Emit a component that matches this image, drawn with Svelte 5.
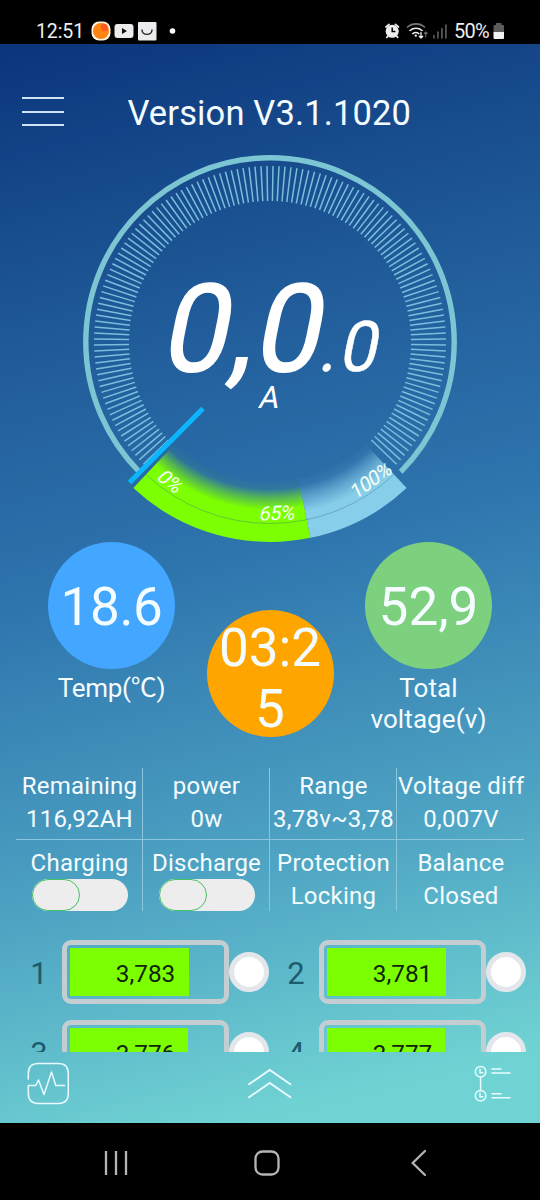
<script lang="ts">
	// gauge geometry, angles in degrees clockwise from the top
	const CX = 270;
	const CY = 342;

	function pt(r: number, deg: number) {
		const a = (deg * Math.PI) / 180;
		return `${(CX + r * Math.sin(a)).toFixed(2)} ${(CY - r * Math.cos(a)).toFixed(2)}`;
	}

	function band(from: number, to: number) {
		return `M${pt(200, from)} A200 200 0 0 0 ${pt(200, to)} L${pt(140, to)} A140 140 0 0 1 ${pt(140, from)}Z`;
	}

	const STEP = 1.9565;
	const ticks = Array.from({ length: 138 }, (_, i) => {
		const deg = (i - 68.5) * STEP;
		return `M${pt(141, deg)} L${pt(176, deg)}`;
	}).join(' ');

	const cells = [
		{ n: 1, v: '3,783', w: 118.5 },
		{ n: 2, v: '3,781', w: 118.5 },
		{ n: 3, v: '3,776', w: 117.5 },
		{ n: 4, v: '3,777', w: 118 }
	];

	let charging = $state(false);
	let discharge = $state(false);
</script>

<div class="screen">
	<div class="status">
		<span class="time">12:51</span>
		<svg class="notif" width="90" height="44" viewBox="90 0 90 44">
			<rect x="91.5" y="21.5" width="19" height="19" rx="7.5" fill="#fff4e4" />
			<circle cx="101" cy="31" r="8" fill="#ff8412" />
			<path d="M101 25q3-3 6 0q2 3 0 6q-4 1-6-2z" fill="#ff5a20" />
			<rect x="114.5" y="24" width="19" height="14" rx="3" fill="#ececee" />
			<path d="M122 28v6l5-3z" fill="#111" />
			<rect x="138" y="22" width="18.5" height="18.5" rx="1" fill="#ececee" />
			<path d="M142 29.5v.6a5 4.3 0 0 0 10 0v-.6" fill="none" stroke="#222" stroke-width="1.4" />
			<circle cx="172.5" cy="31" r="2.8" fill="#fff" />
		</svg>
		<svg class="sys" width="66" height="44" viewBox="383 0 66 44">
			<g fill="none" stroke="#eee" stroke-width="1.8" stroke-linecap="round">
				<path d="M386 27l3-2.6M398.4 27l-3-2.6M388 36l-1.2 1.3M396.5 36l1.2 1.3" />
			</g>
			<circle cx="392.2" cy="31.3" r="6.5" fill="#eee" />
			<path d="M392.2 27.5v4h3.2" fill="none" stroke="#000" stroke-width="1.5" />
			<g fill="none" stroke-width="1.6" stroke-linecap="round">
				<path d="M407.5 27a13 13 0 0 1 17 0" stroke="#777" />
				<path d="M410 30.5a9 9 0 0 1 12 0M412.8 33.6a5 5 0 0 1 6 0" stroke="#eee" />
				<path d="M421 32.5v5.5m-1.7-1.8l1.7 1.8 1.7-1.8" stroke="#eee" stroke-width="1.3" />
				<path d="M425.7 37v-5m-1.5 1.5l1.5-1.5 1.5 1.5" stroke="#666" stroke-width="1.2" />
			</g>
			<circle cx="415.8" cy="35.6" r="1.2" fill="#eee" />
			<g fill="#555">
				<rect x="433" y="35" width="1.8" height="3.5" />
				<rect x="437" y="31.5" width="1.8" height="7" />
				<rect x="441" y="28" width="1.8" height="10.5" />
				<rect x="445" y="24.5" width="1.8" height="14" />
			</g>
		</svg>
		<span class="pct">50%</span>
		<svg class="batt" width="12" height="44" viewBox="493 0 12 44">
			<path d="M496 25v-2h5.5v2H503q1 0 1 1v6H493.5v-6q0-1 1-1z" fill="#5c5c5c" />
			<path d="M493.5 32H504v6q0 1-1 1h-8.500q-1 0-1-1z" fill="#f2f2f2" />
		</svg>
	</div>

	<div class="app">
		<header>
			<button class="menu" aria-label="menu"><i></i><i></i><i></i></button>
			<h1>Version V3.1.1020</h1>
		</header>

		<svg class="gauge" width="540" height="392" viewBox="0 150 540 392">
			<defs>
				<radialGradient id="green" gradientUnits="userSpaceOnUse" cx="270" cy="342" r="200">
					<stop offset="0.7" stop-color="#7cfc00" stop-opacity="0.02" />
					<stop offset="0.735" stop-color="#7cfc00" stop-opacity="0.06" />
					<stop offset="0.78" stop-color="#7cfc00" stop-opacity="0.5" />
					<stop offset="0.84" stop-color="#7cff00" />
				</radialGradient>
				<radialGradient id="sky" gradientUnits="userSpaceOnUse" cx="270" cy="342" r="200">
					<stop offset="0.7" stop-color="#87ceeb" stop-opacity="0.03" />
					<stop offset="0.735" stop-color="#87ceeb" stop-opacity="0.08" />
					<stop offset="0.79" stop-color="#87ceeb" stop-opacity="0.5" />
					<stop offset="0.87" stop-color="#87ceeb" />
				</radialGradient>
			</defs>
			<path class="ring" d="M{pt(184.2, -134.8)} A184.2 184.2 0 1 1 {pt(184.2, 134.8)}" />
			<path class="ticks" d={ticks} />
			<path d={band(223.1, 168.3)} fill="url(#green)" />
			<path d={band(168.3, 136.9)} fill="url(#sky)" />
			<path class="hair" d="M{pt(181.5, 223)} A181.5 181.5 0 0 0 {pt(181.5, 137)}" />
			<line class="needle" x1="129.5" y1="482.5" x2="203" y2="408.5" />
			<g class="marks">
				<text transform="translate(170.5 481.5) rotate(38) skewX(-12)" y="7">0%</text>
				<text transform="translate(277.5 513) rotate(-2) skewX(-12)" y="7">65%</text>
				<text transform="translate(371 480) rotate(-36) skewX(-12)" y="7">100%</text>
			</g>
			<g class="value">
				<text transform="translate(159.3 371) skewX(-11.5) scale(0.96 1)" font-size="122" stroke-width="1.6" letter-spacing="1.8">0,0</text>
				<text transform="translate(317.5 371) skewX(-11.5) scale(0.96 1)" font-size="70" stroke-width="0.5" letter-spacing="2.6">.0</text>
				<text transform="translate(267.7 407.5) skewX(-12)" font-size="31" text-anchor="middle">A</text>
			</g>
		</svg>

		<section class="bubbles">
			<div class="bubble">
				<b class="blue">18.6</b>
				<span class="temp">Temp(℃)</span>
			</div>
			<div class="bubble mid">
				<b class="orange">03:25</b>
			</div>
			<div class="bubble">
				<b class="lime">52,9</b>
				<span>Total voltage(v)</span>
			</div>
		</section>

		<section class="stats">
			<div>Remaining<br />116,92AH</div>
			<div>power<br />0w</div>
			<div>Range<br />3,78v~3,78</div>
			<div>Voltage diff<br />0,007V</div>
			<div>
				Charging
				<button class="switch" class:on={charging} aria-label="Charging" onclick={() => (charging = !charging)}></button>
			</div>
			<div>
				Discharge
				<button class="switch" class:on={discharge} aria-label="Discharge" onclick={() => (discharge = !discharge)}></button>
			</div>
			<div>Protection<br />Locking</div>
			<div>Balance<br />Closed</div>
		</section>

		<section class="cells">
			{#each cells as cell (cell.n)}
				<div class="cell">
					<span class="num">{cell.n}</span>
					<div class="case">
						<div class="fill" style="width: {cell.w}px"></div>
						<span>{cell.v}</span>
					</div>
					<div class="lamp"></div>
				</div>
			{/each}
		</section>

		<svg class="tabs" width="540" height="71" viewBox="0 1052 540 71" fill="none" stroke="#e9fbff" stroke-linecap="round">
			<path d="M28.3 1079v-5.500q0-10 10-10h20q10 0 10 10v20q0 10-10 10h-20q-10 0-10-10v-8h7.500l2.700-5.500 5.500 14.500 7.500-22.500 4.300 13.500h8.700" stroke-width="1.5" stroke-linejoin="round" />
			<path d="M249 1084.3l20.700-14.300 20.700 14.300M249 1097.300l20.700-14.300 20.700 14.300" stroke-width="1.9" />
			<g stroke-width="1.5">
				<circle cx="480.6" cy="1071.7" r="5.3" />
				<circle cx="480.6" cy="1095.7" r="5.3" />
				<path d="M480.6 1077v13.400M480 1069.300v3.400h3M480 1093.300v3.400h3M492 1069h9M492 1073h18M492 1093.700h9M492 1097.700h18" />
			</g>
		</svg>
	</div>

	<svg class="nav" width="540" height="77" viewBox="0 1123 540 77" fill="none" stroke="#b4b4b4" stroke-width="2.3">
		<path d="M106 1151v24M116 1151v24M126 1151v24" />
		<rect x="255.5" y="1151.5" width="23" height="23" rx="7" />
		<path d="M425 1151l-12.300 12 12.300 12" stroke-linecap="round" />
	</svg>
</div>

<style>
	:global(body) {
		background: #000;
	}

	.screen,
	.screen *,
	.switch::before {
		box-sizing: border-box;
	}

	.screen {
		width: 540px;
		height: 1200px;
		display: flex;
		flex-direction: column;
		overflow: hidden;
		background: #000;
		color: #f4fcff;
		font-family: Roboto, 'Noto Sans CJK SC', sans-serif;
	}

	svg {
		display: block;
		flex: none;
	}

	button {
		border: 0;
		padding: 0;
		background: none;
	}

	/* status bar */
	.status {
		height: 44px;
		flex: none;
		display: flex;
		font-size: 20px;
		line-height: 63px;
		color: #eee;
	}

	.time {
		width: 90px;
		padding-left: 36px;
		font-size: 19.5px;
		letter-spacing: -0.1px;
	}

	.sys {
		margin-left: 203px;
	}

	.pct {
		width: 44px;
		padding-left: 5px;
		letter-spacing: -0.8px;
	}

	.app {
		height: 1079px;
		flex: none;
		display: flex;
		flex-direction: column;
		background: linear-gradient(166deg, #0b357b 0%, #205b99 26%, #2e75ae 47%, #4ea4c3 73%, #70d3d3 94%);
	}

	header {
		height: 106px;
		display: flex;
		padding: 51px 0 0 22px;
	}

	.menu {
		width: 42px;
		height: 32px;
		padding-top: 2px;
		display: flex;
		flex-direction: column;
		gap: 11.5px;
	}

	.menu i {
		width: 42px;
		height: 2px;
		background: #cfe3f5;
	}

	h1 {
		margin: -1px 0 0 63.5px;
		font-size: 34.5px;
		line-height: 38px;
		font-weight: 400;
		white-space: nowrap;
		letter-spacing: 0.14px;
	}

	/* gauge */
	.ring {
		fill: none;
		stroke: #7cc6d4;
		stroke-width: 5.4;
	}

	.ticks {
		fill: none;
		stroke: #78bfdc;
		stroke-width: 1.5;
	}

	.hair {
		fill: none;
		stroke: #2d6c8c;
		stroke-width: 0.6;
		opacity: 0.6;
	}

	.needle {
		stroke: #0cb6ff;
		stroke-width: 5;
	}

	.marks text {
		fill: #f6fff4;
		font-size: 20px;
		text-anchor: middle;
		letter-spacing: -0.6px;
	}

	.value {
		fill: #fff;
		stroke: #fff;
		stroke-width: 0;
	}

	/* round readouts */
	.bubbles {
		height: 226px;
		flex: none;
		display: flex;
		justify-content: center;
		gap: 31.5px;
	}

	.bubble {
		width: 127px;
		display: flex;
		flex-direction: column;
		align-items: center;
		text-align: center;
		font-size: 26px;
		line-height: 31px;
	}

	.bubble span {
		margin-top: 4px;
		letter-spacing: 0.1px;
	}

	.bubble .temp {
		letter-spacing: -0.3px;
	}

	.bubble.mid {
		padding-top: 68px;
	}

	.bubble b {
		width: 127px;
		height: 127px;
		flex: none;
		display: grid;
		place-content: center;
		border-radius: 50%;
		padding: 4px 10px 0;
		font-size: 53px;
		line-height: 61px;
		font-weight: 400;
	}

	.bubble .blue {
		background: #43a6ff;
		letter-spacing: -0.3px;
	}

	.bubble .orange {
		padding-top: 10px;
		background: #ffa500;
		word-break: break-all;
	}

	.bubble .lime {
		background: #7dd07e;
	}

	/* summary table */
	.stats {
		width: 508px;
		margin-left: 16px;
		flex: none;
		display: grid;
		grid-template-columns: repeat(4, 127px);
		grid-template-rows: 72px 71px;
		font-size: 24px;
		line-height: 33px;
		letter-spacing: 0.25px;
		text-align: center;
		white-space: nowrap;
	}

	.stats div {
		padding: 2px 0 0 1px;
		border-right: 1px solid #8cc6de;
		border-bottom: 1px solid #8cc6de;
	}

	.stats div:nth-child(4n) {
		border-right: 0;
	}

	.stats div:nth-child(n + 5) {
		padding-top: 7px;
		border-bottom: 0;
	}

	.switch {
		display: block;
		width: 96px;
		height: 32px;
		margin: -1px auto 0 15px;
		border-radius: 16px;
		background: #ededed;
	}

	.switch::before {
		content: '';
		display: block;
		width: 48px;
		height: 32px;
		border: 1.5px solid #45c163;
		border-radius: 16px;
	}

	.switch.on {
		background: #45c163;
	}

	.switch.on::before {
		margin-left: 48px;
		background: #ededed;
	}

	/* cell list */
	.cells {
		height: 141px;
		padding: 29px 0 0 16px;
		flex: none;
		display: grid;
		grid-template-columns: 257px 257px;
		grid-auto-rows: 64px;
		row-gap: 16px;
		overflow: hidden;
	}

	.cell {
		display: flex;
		align-items: center;
	}

	.num {
		width: 46px;
		padding-top: 2px;
		text-align: center;
		font-size: 31px;
		color: #1c5c6d;
	}

	.case {
		position: relative;
		width: 167px;
		height: 64px;
		padding: 3px;
		border: 5px solid #c4cdd2;
		border-radius: 9px;
	}

	.fill {
		height: 48px;
		background: #7cff00;
	}

	.case span {
		position: absolute;
		inset: 0;
		font-size: 24.3px;
		line-height: 57px;
		text-align: center;
		color: #10240a;
	}

	.lamp {
		width: 40px;
		height: 40px;
		flex: none;
		border: 5px solid #e3e6ea;
		border-radius: 50%;
		background: #fff;
	}
</style>
